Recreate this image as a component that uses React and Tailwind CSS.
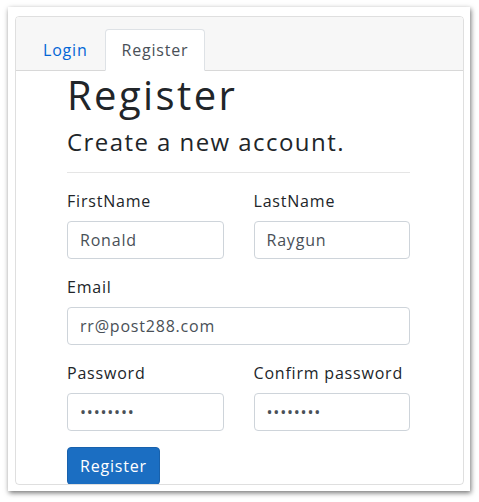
import React from "react";

function Field({ label, value, type = "text" }) {
  return (
    <div className="flex flex-col">
      <label className="mb-2 text-[16px] leading-[24px] text-[#212529]">{label}</label>
      <input
        type={type}
        value={value}
        readOnly
        className="h-[38px] w-full rounded-[4px] border border-[#ced4da] bg-white px-3 text-[16px] tracking-[0.05em] text-[#495057] outline-none"
      />
    </div>
  );
}

export default function App() {
  return (
    <div className="min-h-[502px] w-[479px] bg-white pl-[8px] pt-[7px] font-['Open_Sans',sans-serif] tracking-[0.05em]">
      <div className="h-[484px] w-[462px] bg-white pl-[7px] pt-[9px] shadow-[1px_2px_5px_rgba(0,0,0,0.55)]">
        <div className="flex h-[469px] w-[449px] flex-col overflow-hidden rounded-[4px] border border-[rgba(0,0,0,0.125)]">
          <div className="border-b border-[rgba(0,0,0,0.125)] bg-[#f7f7f7] px-[10px] pt-[12px]">
            <div className="-mb-px flex">
              <div className="border border-transparent px-4 py-2 text-[16px] leading-[24px] text-[#0366d6]">Login</div>
              <div className="rounded-t-[4px] border border-[#dee2e6] border-b-white bg-white px-4 py-2 text-[16px] leading-[24px] text-[#495057]">
                Register
              </div>
            </div>
          </div>
          <div className="ml-[51px] w-[343px] text-[#212529]">
            <h1 className="mb-2 text-[40px] leading-[48px] tracking-[0.06em]">Register</h1>
            <h4 className="text-[24px] leading-[29px] tracking-[0.06em]">Create a new account.</h4>
            <hr className="my-4 border-t border-[rgba(0,0,0,0.1)]" />
            <div className="grid grid-cols-2 gap-x-[30px] gap-y-4">
              <Field label="FirstName" value="Ronald" />
              <Field label="LastName" value="Raygun" />
              <div className="col-span-2">
                <Field label="Email" value="rr@post288.com" />
              </div>
              <Field label="Password" value="12345678" type="password" />
              <Field label="Confirm password" value="12345678" type="password" />
            </div>
            <button className="mt-4 h-[38px] rounded-[4px] border border-[#1861ac] bg-[#1b6ec2] px-3 text-[16px] tracking-[0.05em] text-white">
              Register
            </button>
          </div>
        </div>
      </div>
    </div>
  );
}
